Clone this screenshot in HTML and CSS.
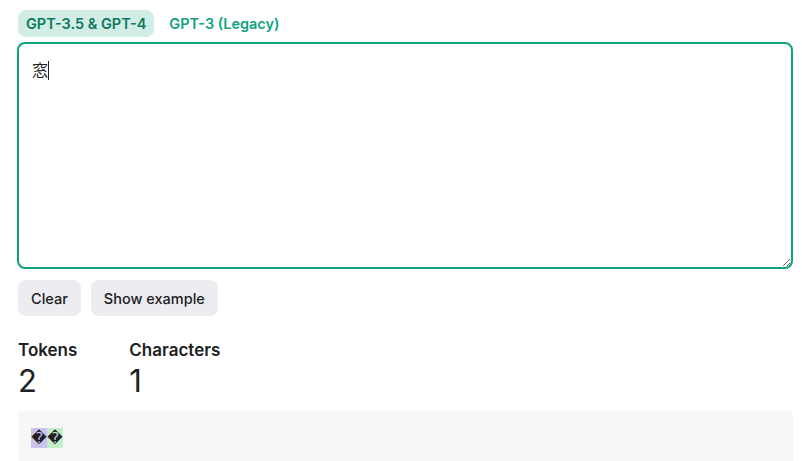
FILE: index.html
```html
<!DOCTYPE html>
<html lang="en">
<head>
    <meta charset="UTF-8">
    <meta name="viewport" content="width=device-width, initial-scale=1.0">
    <title>Tokenizer</title>
    <link rel="stylesheet" href="styles.css">
</head>
<body>
    <div class="tokenizer">
        <div class="model-tabs">
            <button class="model-tab active">GPT-3.5 &amp; GPT-4</button>
            <button class="model-tab">GPT-3 (Legacy)</button>
        </div>

        <div class="input-box">
            <textarea class="token-input" autofocus>窓</textarea>
            <span class="caret"></span>
        </div>

        <div class="actions">
            <button class="action-button">Clear</button>
            <button class="action-button">Show example</button>
        </div>

        <div class="stats">
            <div class="stat">
                <div class="stat-label">Tokens</div>
                <div class="stat-value">2</div>
            </div>
            <div class="stat">
                <div class="stat-label">Characters</div>
                <div class="stat-value">1</div>
            </div>
        </div>

        <div class="token-output">
            <span class="token token-purple">�</span><span class="token token-green">�</span>
        </div>
    </div>
</body>
</html>
```

FILE: styles.css
```css
body {
    font-family: Inter, "Liberation Sans", "Noto Sans CJK JP", sans-serif;
    margin: 0;
    padding: 10px 9px 0 17px;
    background-color: #fff;
    color: #202123;
    overflow: hidden;
}

.model-tabs {
    display: flex;
    gap: 7px;
    margin-bottom: 5px;
}

.model-tab {
    font-family: inherit;
    font-size: 14.5px;
    font-weight: 600;
    background: transparent;
    border: none;
    border-radius: 8px;
    padding: 0 8px;
    height: 27px;
    color: #10a37f;
    cursor: pointer;
}

.model-tab.active {
    background-color: #d2ede5;
    color: #0b7a5e;
    margin-left: 1px;
}

.input-box {
    display: flex;
    position: relative;
}

.token-input {
    flex: 1;
    height: 227px;
    box-sizing: border-box;
    border: 2px solid #10a37f;
    border-radius: 8px;
    padding: 13px 13px;
    font-family: "Liberation Mono", "Noto Sans CJK JP", monospace;
    font-size: 16px;
    color: #202123;
    outline: none;
    resize: vertical;
}

/* text cursor after the typed character */
.caret {
    position: absolute;
    left: 31px;
    top: 19px;
    width: 1px;
    height: 19px;
    background-color: #202123;
}

.actions {
    display: flex;
    gap: 10px;
    margin-top: 11px;
    padding-left: 1px;
}

.action-button {
    font-family: inherit;
    font-size: 14.5px;
    font-weight: 500;
    color: #202123;
    background-color: #ececf1;
    border: none;
    border-radius: 8px;
    height: 36px;
    padding: 0 13px;
    cursor: pointer;
}

.stats {
    display: flex;
    gap: 52px;
    margin-top: 25px;
    padding-left: 1px;
}

.stat {
    min-width: 58px;
}

.stat-label {
    font-size: 17px;
    font-weight: 600;
    line-height: 18px;
}

.stat-value {
    font-size: 31px;
    font-weight: 400;
    line-height: 34px;
    margin-top: 5px;
}

.token-output {
    margin-top: 13px;
    margin-left: 1px;
    background-color: #f7f7f7;
    border-radius: 4px 4px 0 0;
    padding: 16px 13px;
    height: 60px;
    box-sizing: border-box;
}

.token {
    display: inline-block;
    width: 16px;
    height: 20px;
    line-height: 20px;
    text-align: center;
    font-size: 15px;
    font-family: "DejaVu Sans", sans-serif;
}

.token-purple {
    background-color: #cdc2ef;
}

.token-green {
    background-color: #c2eec9;
}
```
